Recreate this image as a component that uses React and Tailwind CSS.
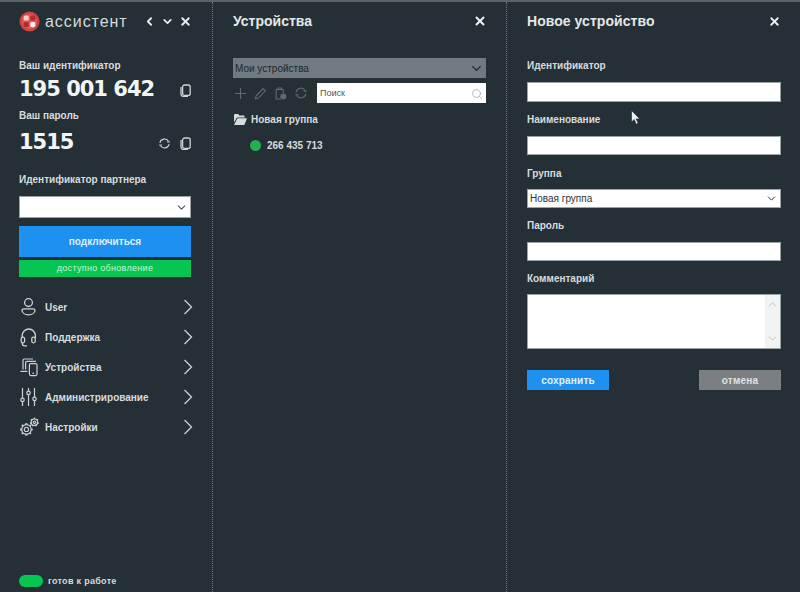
import React from "react";
import { ChevronLeft, ChevronDown, ChevronUp, X, Search } from "lucide-react";

const Sync = ({ size = 14, className = "" }) => (
  <svg width={size} height={size} viewBox="0 0 16 16" fill="none" stroke="currentColor" strokeWidth="1.3" className={className}>
    <path d="M2.3 7.2a5.8 5.8 0 0 1 10.6-2" />
    <path d="M13.7 8.8a5.8 5.8 0 0 1-10.6 2" />
    <path d="M11 6h3.6" />
    <path d="M1.4 10h3.6" />
  </svg>
);

const CopyIcon = () => (
  <svg width="11" height="13" viewBox="0 0 11 13" fill="none" stroke="#d0d4d6" strokeWidth="1.3">
    <rect x="2.6" y="1" width="7.6" height="10.4" rx="2" />
    <path d="M1 3v7a2.4 2.4 0 0 0 2.4 2.4H8" />
  </svg>
);

const Logo = () => (
  <svg width="21" height="21" viewBox="0 0 21 21">
    <circle cx="10.5" cy="10.5" r="10" fill="#cf4440" />
    <circle cx="10.5" cy="10.5" r="7.5" fill="#dd5a55" />
    <rect x="4.6" y="4.4" width="5.2" height="5.2" rx="1.6" fill="#f6cfcb" />
    <rect x="11.2" y="4.4" width="5.2" height="5.2" rx="1.6" fill="#b92a2c" />
    <rect x="4.6" y="11" width="5.2" height="5.2" rx="1.6" fill="#b92a2c" />
    <rect x="11.2" y="11" width="5.2" height="5.2" rx="1.6" fill="#fbeeec" />
  </svg>
);

const UserI = () => (
  <svg width="20" height="20" viewBox="0 0 20 20" fill="none" stroke="currentColor" strokeWidth="1.3">
    <circle cx="9.5" cy="5.6" r="3.9" />
    <path d="M3 13.2c0-1 1-1.4 2-1.4h9c1 0 2 .4 2 1.4 0 2.8-3 4.6-6.5 4.6S3 16 3 13.2z" />
  </svg>
);
const HeadsetI = () => (
  <svg width="20" height="20" viewBox="0 0 20 20" fill="none" stroke="currentColor" strokeWidth="1.3">
    <path d="M3.2 11V8.6a6.6 6.6 0 0 1 13.2 0V11" />
    <rect x="2.2" y="10.2" width="3.4" height="5.6" rx="1.5" />
    <rect x="12.8" y="10.2" width="3.4" height="5.6" rx="1.5" />
    <path d="M3.4 15.8v1a2 2 0 0 0 2 2H8" />
  </svg>
);
const DevicesI = () => (
  <svg width="20" height="20" viewBox="0 0 20 20" fill="none" stroke="currentColor" strokeWidth="1.2">
    <path d="M4 12.5V3.6C4 2.7 4.7 2 5.6 2H14" />
    <path d="M6.6 12.5V6c0-.9.7-1.6 1.6-1.6H17" />
    <path d="M1.4 14.4h7" />
    <rect x="10.4" y="6.6" width="7.6" height="12" rx="1.5" fill="#242f36" />
    <path d="M13.4 16.4h1.6" />
  </svg>
);
const SlidersI = () => (
  <svg width="20" height="20" viewBox="0 0 20 20" fill="none" stroke="currentColor" strokeWidth="1.2">
    <path d="M3.5 1v10.2M3.5 14.6V19" />
    <circle cx="3.5" cy="12.9" r="1.7" />
    <path d="M9.5 1v3.2M9.5 7.6V19" />
    <circle cx="9.5" cy="5.9" r="1.7" />
    <path d="M15.5 1v9.2M15.5 13.6V19" />
    <circle cx="15.5" cy="11.9" r="1.7" />
  </svg>
);
const Gear = ({ cx, cy, r, inner, teeth, len, w }) => (
  <g>
    <circle cx={cx} cy={cy} r={r} strokeWidth="1.2" />
    <circle cx={cx} cy={cy} r={inner} strokeWidth="1.1" />
    {Array.from({ length: teeth }, (_, i) => (
      <path key={i} d={`M${cx} ${cy - r}v-${len}`} strokeWidth={w} transform={`rotate(${(360 / teeth) * i} ${cx} ${cy})`} />
    ))}
  </g>
);
const GearsI = () => (
  <svg width="21" height="20" viewBox="0 0 21 20" fill="none" stroke="currentColor">
    <Gear cx={7.4} cy={12.4} r={4.7} inner={2.1} teeth={8} len={1.6} w={2} />
    <Gear cx={15.4} cy={5.2} r={3.2} inner={1.2} teeth={7} len={1.3} w={1.5} />
  </svg>
);

const Chev = () => (
  <svg width="10" height="16" viewBox="0 0 10 16" fill="none" stroke="currentColor" strokeWidth="1.3" className="ml-auto mr-[-2px]">
    <path d="M1.5 1l7 7-7 7" />
  </svg>
);

const Label = ({ children, className = "" }) => (
  <div className={`text-[10px] leading-[14px] font-bold text-[#d8dcde] ${className}`}>{children}</div>
);

const Field = ({ className = "", children }) => (
  <div className={`bg-white border border-[#9aa3a8] flex items-center justify-between text-[10px] text-[#333] px-[2px] ${className}`}>{children}</div>
);

const menu = [
  ["User", UserI],
  ["Поддержка", HeadsetI],
  ["Устройства", DevicesI],
  ["Администрирование", SlidersI],
  ["Настройки", GearsI],
];

const Divider = () => <div className="w-0 shrink-0 border-l border-dotted border-[#6d777c]" />;

export default function App() {
  return (
    <div className="relative w-[800px] h-[592px] overflow-hidden bg-[#242f36] border-t-2 border-[#5d6367] flex text-white" style={{ fontFamily: '"Liberation Sans", Arial, sans-serif' }}>
      {/* left */}
      <div className="w-[212px] shrink-0 pl-[19px] pr-[21px] flex flex-col">
        <div className="h-[21px] mt-[9px] flex items-center">
          <Logo />
          <span className="ml-[5px] text-[16px] tracking-[0.95px] text-[#d6dadc]">ассистент</span>
          <div className="ml-auto mr-[-1px] flex items-center gap-[5px] text-[#e8eaeb]">
            <ChevronLeft size={13} strokeWidth={3.4} />
            <ChevronDown size={13} strokeWidth={3.4} />
            <X size={13} strokeWidth={3.6} />
          </div>
        </div>
        <Label className="mt-[27px]">Ваш идентификатор</Label>
        <div className="mt-[3px] h-[28px] flex items-center justify-between">
          <span className="text-[21px] font-bold tracking-[-1px] text-[#f3f4f5]" style={{ fontFamily: '"DejaVu Sans", sans-serif' }}>195 001 642</span>
          <CopyIcon />
        </div>
        <Label className="mt-[5px]">Ваш пароль</Label>
        <div className="mt-[6px] h-[28px] flex items-center justify-between">
          <span className="text-[21px] font-bold tracking-[-1px] text-[#f3f4f5]" style={{ fontFamily: '"DejaVu Sans", sans-serif' }}>1515</span>
          <div className="flex items-center gap-[9px] text-[#d0d4d6]">
            <Sync size={13} />
            <CopyIcon />
          </div>
        </div>
        <Label className="mt-[16px]">Идентификатор партнера</Label>
        <Field className="mt-[9px] h-[22px]">
          <span />
          <ChevronDown size={13} strokeWidth={2.2} className="text-[#555]" />
        </Field>
        <div className="mt-[8px] h-[31px] bg-[#1e90f0] flex items-center justify-center text-[10px] font-bold text-[#dff0fc]">подключиться</div>
        <div className="mt-[3px] h-[17px] bg-[#06c553] flex items-center justify-center text-[9px] tracking-[0.3px] text-[#c9f5d8]">доступно обновление</div>
        <div className="mt-[15px] flex flex-col">
          {menu.map(([t, I]) => (
            <div key={t} className="h-[30px] flex items-center text-[#cfd3d6]">
              <div className="w-[26px] shrink-0 flex"><I /></div>
              <span className="text-[10px] font-bold text-[#d8dcde]">{t}</span>
              <Chev />
            </div>
          ))}
        </div>
        <div className="mt-auto mb-[4px] flex items-center gap-[5px]">
          <div className="w-[24px] h-[12px] rounded-full bg-[#06c553]" />
          <span className="text-[9px] font-bold tracking-[0.3px] text-[#d8dcde]">готов к работе</span>
        </div>
      </div>
      <Divider />
      {/* middle */}
      <div className="w-[293px] shrink-0 pl-[20px] pr-[20px] flex flex-col">
        <div className="h-[24px] mt-[7px] flex items-center justify-between">
          <span className="text-[14px] font-bold text-[#e4e7e8]">Устройства</span>
          <X size={14} strokeWidth={3.4} className="mr-[-1px] text-[#f0f1f2]" />
        </div>
        <div className="mt-[25px] h-[20px] bg-[#707a80] flex items-center justify-between px-[2px] text-[10px] text-[#20282c]">
          Мои устройства
          <ChevronDown size={15} strokeWidth={2.2} className="text-[#1e262a]" />
        </div>
        <div className="mt-[5px] h-[20px] flex items-center justify-between">
          <div className="flex items-center gap-[7px] text-[#5e6a70] pl-[1px]">
            <svg width="13" height="13" viewBox="0 0 13 13" fill="none" stroke="currentColor" strokeWidth="1.1"><path d="M6.5 1v11M1 6.5h11" /></svg>
            <svg width="13" height="13" viewBox="0 0 13 13" fill="none" stroke="currentColor" strokeWidth="1.1"><path d="M2 9l7-7.4 2.4 2.2-7.1 7.3-2.8.6z" /></svg>
            <svg width="13" height="13" viewBox="0 0 13 13" fill="none" stroke="currentColor" strokeWidth="1.1"><path d="M7 12H2.2V2.5h7V6" /><path d="M4 2.5V1h3.4v1.5" /><circle cx="9.3" cy="9.5" r="2.5" fill="currentColor" /></svg>
            <Sync size={14} />
          </div>
          <div className="w-[169px] h-[20px] bg-white flex items-center justify-between px-[3px] pt-[1px] text-[9px] text-[#555]">
            Поиск
            <Search size={12} strokeWidth={1.3} className="text-[#999]" />
          </div>
        </div>
        <div className="mt-[6px] h-[20px] flex items-center gap-[4px] pl-[1px]">
          <svg width="13" height="11" viewBox="0 0 13 11" fill="#d8dcde"><path d="M0 1.2C0 .5.5 0 1.2 0h3l1.2 1.4h4.2c.6 0 1 .4 1 1V3.4H3L0 8.6z" /><path d="M3.5 4.2H13l-2.6 6.8H0z" /></svg>
          <span className="text-[10px] font-bold text-[#d8dcde]">Новая группа</span>
        </div>
        <div className="mt-[6px] h-[20px] flex items-center gap-[6px] pl-[17px]">
          <div className="w-[11px] h-[11px] rounded-full bg-[#22b14c]" />
          <span className="text-[10px] font-bold text-[#d8dcde]">266 435 713</span>
        </div>
      </div>
      <Divider />
      {/* right */}
      <div className="flex-1 pl-[20px] pr-[19px] flex flex-col">
        <div className="h-[24px] mt-[7px] flex items-center justify-between">
          <span className="text-[14px] font-bold tracking-[0.05px] text-[#e4e7e8]">Новое устройство</span>
          <X size={13} strokeWidth={3.4} className="text-[#f0f1f2]" />
        </div>
        <Label className="mt-[26px]">Идентификатор</Label>
        <Field className="mt-[9px] h-[20px] border-[#5aa7d8]" />
        <Label className="mt-[11px]">Наименование</Label>
        <Field className="mt-[9px] h-[19px]" />
        <Label className="mt-[12px]">Группа</Label>
        <Field className="mt-[8px] h-[19px]">
          Новая группа
          <ChevronDown size={13} strokeWidth={1.8} className="text-[#333]" />
        </Field>
        <Label className="mt-[11px]">Пароль</Label>
        <Field className="mt-[9px] h-[19px]" />
        <Label className="mt-[11px]">Комментарий</Label>
        <div className="mt-[8px] h-[55px] bg-white border border-[#9aa3a8] flex justify-end">
          <div className="w-[15px] bg-[#f2f3f3] flex flex-col items-center justify-between py-[3px] text-[#a8adb0]">
            <ChevronUp size={13} strokeWidth={1.3} />
            <ChevronDown size={13} strokeWidth={1.3} />
          </div>
        </div>
        <div className="mt-[21px] flex justify-between">
          <div className="w-[82px] h-[20px] bg-[#1e90f0] flex items-center justify-center text-[10px] font-bold tracking-[0.2px] text-[#e6f2fc]">сохранить</div>
          <div className="w-[82px] h-[20px] bg-[#7b7f82] flex items-center justify-center text-[10px] font-bold tracking-[0.2px] text-[#dfe1e2]">отмена</div>
        </div>
      </div>
      {/* cursor */}
      <svg className="absolute left-[631px] top-[108px]" width="10" height="15" viewBox="0 0 10 15">
        <path d="M0.5 0.5v11.5l2.7-2.4 2 4.6 2-0.9-2-4.4h3.6z" fill="#eceeef" stroke="#20282c" strokeWidth="0.6" />
      </svg>
    </div>
  );
}
